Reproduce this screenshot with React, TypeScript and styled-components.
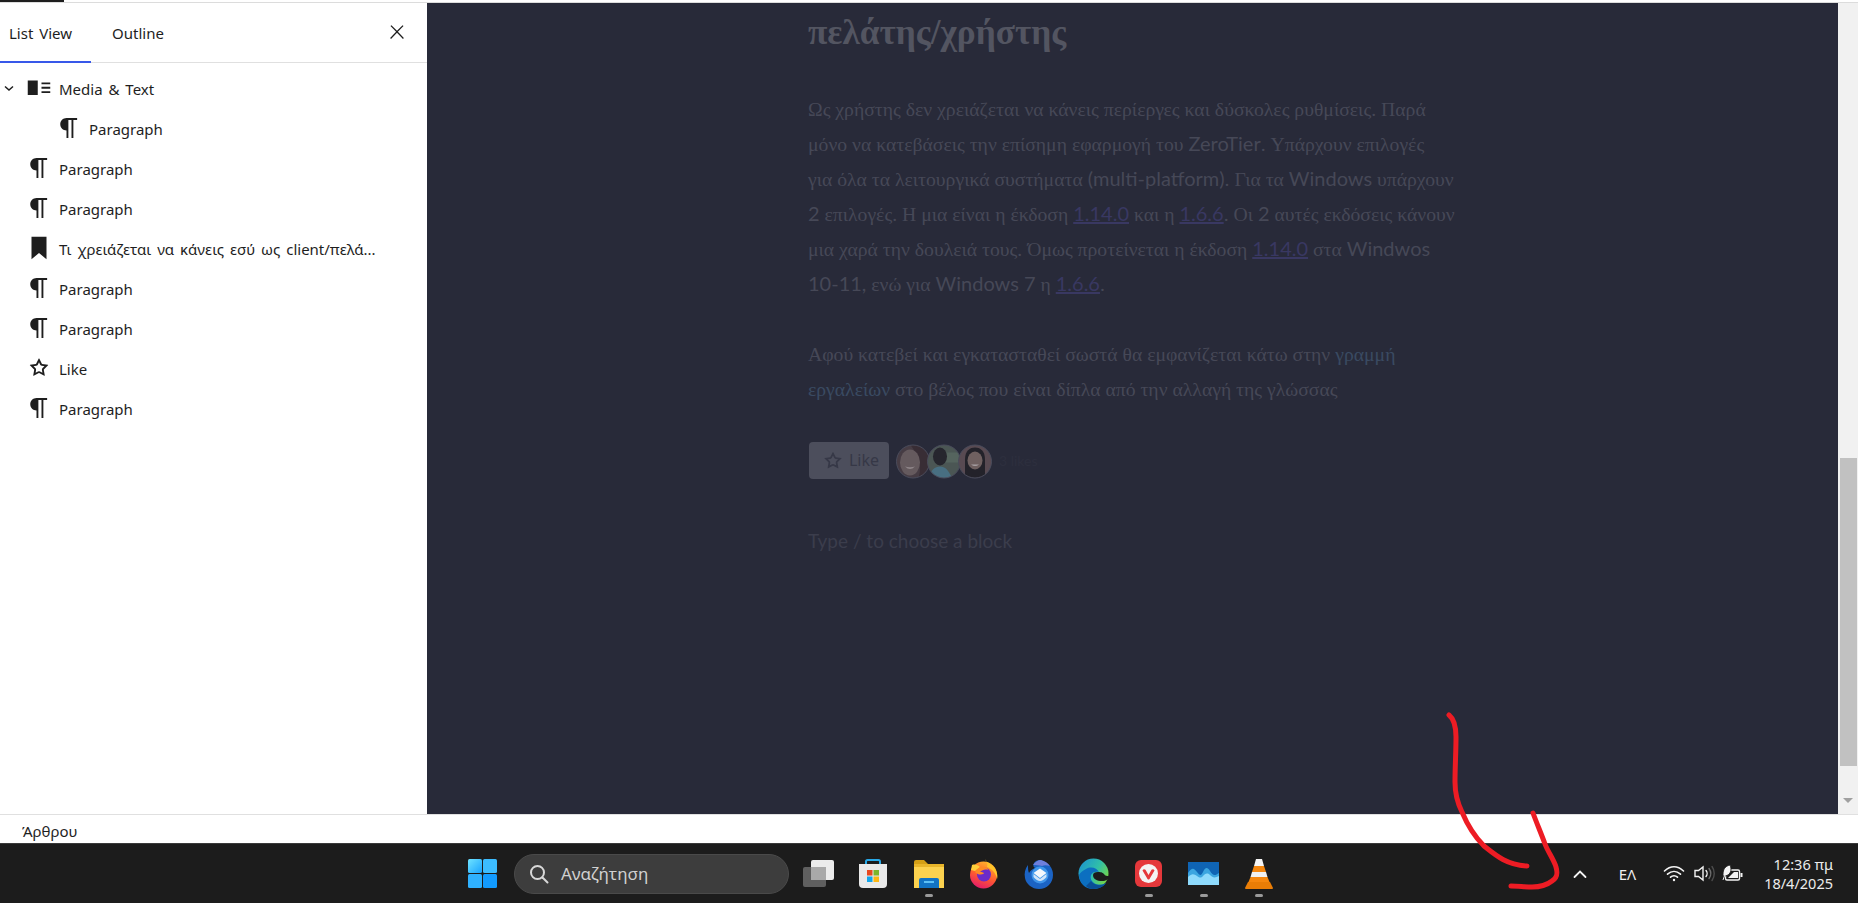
import React from "react";
import styled, { createGlobalStyle } from "styled-components";

const Global = createGlobalStyle`
  html, body { margin: 0; padding: 0; height: 100%; overflow: hidden; background: #fff; }
  #root { height: 100%; }
  * { box-sizing: border-box; }
`;

const Page = styled.div`
  position: relative;
  display: flex;
  flex-direction: column;
  height: 903px;
  width: 1858px;
  overflow: hidden;
  font-family: "Noto Sans", sans-serif;
`;
const TopStrip = styled.div`
  height: 3px;
  flex: none;
  background: #fff;
  border-bottom: 1px solid #dcdcdc;
`;
const TopTab = styled.div`
  width: 64px;
  height: 2px;
  background: #1e1e1e;
`;
const Main = styled.div`
  flex: 1;
  min-height: 0;
  display: flex;
  border-bottom: 1px solid #e0e0e0;
`;
const Sidebar = styled.aside`
  width: 428px;
  flex: none;
  background: #fff;
  border-right: 1px solid #282a39;
`;
const Tabs = styled.div`
  height: 60px;
  display: flex;
  align-items: center;
  border-bottom: 1px solid #e0e0e0;
  position: relative;
`;
const Tab = styled.div<{ $active?: boolean }>`
  height: 60px;
  width: ${(p) => (p.$active ? "91px" : "auto")};
  padding-left: ${(p) => (p.$active ? "9px" : "21px")};
  display: flex;
  align-items: center;
  font-size: 15px;
  word-spacing: 2px;
  color: #1e1e1e;
  box-shadow: ${(p) => (p.$active ? "inset 0 -2px 0 #3858e9" : "none")};
`;
const CloseBtn = styled.div`
  margin-left: auto;
  margin-right: 19px;
  display: flex;
  padding-bottom: 2px;
`;
const List = styled.div`
  padding-top: 6px;
`;
const Row = styled.div<{ $nested?: boolean }>`
  height: 40px;
  display: flex;
  align-items: center;
  padding-left: ${(p) => (p.$nested ? "54px" : "24px")};
  font-size: 15px;
  word-spacing: 2px;
  color: #1e1e1e;
  white-space: nowrap;
  position: relative;
`;
const Chevron = styled.svg`
  position: absolute;
  left: 0;
  top: 10px;
`;
const RowIcon = styled.svg`
  flex: none;
  width: 30px;
  height: 30px;
  margin-right: 5px;
  margin-top: -2px;
  fill: #1e1e1e;
`;
const Canvas = styled.main`
  flex: 1;
  background: #282a39;
  min-width: 0;
`;
const Article = styled.div`
  width: 650px;
  margin: 0 auto;
  font-family: "Liberation Serif", serif;
  font-size: 19.7px;
  line-height: 35px;
  color: #464857;
`;
const Heading = styled.h2`
  margin: 0;
  padding-top: 8px;
  height: 89px;
  font-family: "Liberation Serif", serif;
  font-weight: 700;
  font-size: 35.3px;
  line-height: 44px;
  color: #535561;
`;
const Para = styled.p`
  margin: 0 0 35px;
`;
const Line = styled.span`
  display: block;
  height: 35px;
  white-space: nowrap;
`;
const Latin = styled.span`
  font-family: Lato, sans-serif;
  font-size: 20px;
  line-height: 1;
`;
const Anchor = styled(Latin)`
  color: #393862;
  text-decoration: underline;
`;
const Highlight = styled.span`
  color: #3a4a62;
`;
const LikeRow = styled.div`
  display: flex;
  align-items: center;
  height: 37px;
  margin-top: 35px;
`;
const LikeButton = styled.div`
  width: 80px;
  height: 37px;
  margin-left: 1px;
  border-radius: 4px;
  background: #4c4e5c;
  display: flex;
  align-items: center;
  justify-content: center;
  gap: 2px;
  font-family: "Noto Sans", sans-serif;
  font-size: 16px;
  color: #363847;
`;
const Avatars = styled.div`
  display: flex;
  margin-left: 7px;
  align-self: flex-end;
`;
const Avatar = styled.svg`
  width: 34px;
  height: 35px;
  margin-right: -3px;
`;
const LikeCount = styled.span`
  margin-left: 10px;
  font-family: Lato, sans-serif;
  font-size: 14px;
  color: #2d2f3e;
`;
const Placeholder = styled.div`
  margin-top: 44px;
  font-family: Lato, sans-serif;
  font-size: 19px;
  color: #3b3d4c;
`;
const ScrollTrack = styled.div`
  width: 20px;
  flex: none;
  background: #f1f1f1;
  display: flex;
  flex-direction: column;
  align-items: flex-end;
`;
const ScrollThumb = styled.div`
  width: 17px;
  height: 308px;
  margin-top: 455px;
  margin-right: 1px;
  background: #c1c1c1;
`;
const ScrollArrow = styled.div`
  margin: auto 5px 11px 0;
  width: 0;
  height: 0;
  border-left: 5px solid transparent;
  border-right: 5px solid transparent;
  border-top: 5px solid #a0a0a0;
`;
const Footer = styled.div`
  height: 28px;
  flex: none;
  background: #fff;
  padding: 6px 0 0 22px;
  font-size: 15px;
  line-height: 20px;
  color: #1e1e1e;
`;
const Taskbar = styled.div`
  height: 60px;
  flex: none;
  background: #1c1c1c;
  border-top: 1px solid #3a3a3a;
  display: flex;
  align-items: center;
  padding-left: 468px;
  position: relative;
`;
const SearchBox = styled.div`
  width: 275px;
  height: 40px;
  margin: 0 7px 0 17px;
  border-radius: 20px;
  background: #3d3d3d;
  border: 1px solid #4a4a4a;
  display: flex;
  align-items: center;
  gap: 12px;
  padding-left: 14px;
  font-size: 17px;
  color: #d0d0d0;
`;
const TaskSlot = styled.div<{ $w: number; $on?: boolean }>`
  width: ${(p) => p.$w}px;
  height: 59px;
  display: flex;
  align-items: center;
  justify-content: center;
  position: relative;
  flex: none;
  &::after {
    content: "";
    display: ${(p) => (p.$on ? "block" : "none")};
    position: absolute;
    bottom: 6px;
    left: 50%;
    margin-left: -4px;
    width: 8px;
    height: 3px;
    border-radius: 2px;
    background: #9a9a9a;
  }
`;
const Tray = styled.div`
  margin-left: auto;
  display: flex;
  align-items: center;
  height: 100%;
  padding-right: 25px;
`;
const TrayChevron = styled.svg`
  margin-right: 32px;
`;
const Lang = styled.span`
  font-size: 15px;
  color: #f0f0f0;
  margin-right: 27px;
`;
const TrayIcons = styled.div`
  display: flex;
  align-items: center;
  gap: 6px;
  margin-right: 21px;
`;
const Clock = styled.div`
  text-align: right;
  font-size: 14.5px;
  line-height: 19px;
  color: #ececec;
`;
const Scribble = styled.svg`
  position: absolute;
  left: 1440px;
  top: 705px;
  pointer-events: none;
`;

const PILCROW = "m9.99609 14v-.2251l.00391.0001v6.225h1.5v-14.5h2.5v14.5h1.5v-14.5h3v-1.5h-8.50391c-2.76142 0-5 2.23858-5 5 0 2.7614 2.23858 5 5 5z";
const STAR = "M9.706 8.646a.25.25 0 01-.188.137l-4.626.672a.25.25 0 00-.139.427l3.348 3.262a.25.25 0 01.072.222l-.79 4.607a.25.25 0 00.362.264l4.138-2.176a.25.25 0 01.233 0l4.137 2.175a.25.25 0 00.363-.263l-.79-4.607a.25.25 0 01.072-.222l3.347-3.262a.25.25 0 00-.14-.427l-4.625-.672a.25.25 0 01-.188-.137l-2.069-4.192a.25.25 0 00-.448 0L9.706 8.646zM12 7.39l-.948 1.921a1.75 1.75 0 01-1.317.957l-2.12.308 1.534 1.495c.412.402.6.982.503 1.55l-.362 2.11 1.896-.997a1.75 1.75 0 011.629 0l1.895.997-.362-2.11a1.75 1.75 0 01.504-1.55l1.533-1.495-2.12-.308a1.75 1.75 0 01-1.317-.957L12 7.39z";

const rows: { d: string; label: string; nested?: boolean; chevron?: boolean }[] = [
  { d: "M3 6v11.5h8V6H3Zm11 3h7V7.5h-7V9Zm7 3.5h-7V11h7v1.5ZM14 16h7v-1.5h-7V16Z", label: "Media & Text", chevron: true },
  { d: PILCROW, label: "Paragraph", nested: true },
  { d: PILCROW, label: "Paragraph" },
  { d: PILCROW, label: "Paragraph" },
  { d: "M6 3H18V21L12 16L6 21V3Z", label: "Τι χρειάζεται να κάνεις εσύ ως client/πελά..." },
  { d: PILCROW, label: "Paragraph" },
  { d: PILCROW, label: "Paragraph" },
  { d: STAR, label: "Like" },
  { d: PILCROW, label: "Paragraph" },
];

const WinLogo = () => (
  <svg width="29" height="29" viewBox="0 0 29 29">
    <defs>
      <linearGradient id="w1" x1="0" y1="0" x2="1" y2="1">
        <stop offset="0" stopColor="#6fe3ff" />
        <stop offset="1" stopColor="#19a3ff" />
      </linearGradient>
    </defs>
    <rect x="0" y="0" width="14" height="14" rx="1.5" fill="url(#w1)" />
    <rect x="15" y="0" width="14" height="14" rx="1.5" fill="#3cbcff" />
    <rect x="0" y="15" width="14" height="14" rx="1.5" fill="#2fb1ff" />
    <rect x="15" y="15" width="14" height="14" rx="1.5" fill="#129bff" />
  </svg>
);
const SearchGlyph = () => (
  <svg width="20" height="20" viewBox="0 0 20 20" fill="none" stroke="#d8d8d8" strokeWidth="2">
    <circle cx="8.5" cy="8.5" r="6.5" />
    <path d="M13.5 13.5 18.5 18.5" strokeLinecap="round" />
  </svg>
);
const TaskView = () => (
  <svg width="34" height="30" viewBox="0 0 34 30">
    <rect x="0" y="8" width="23" height="20" rx="2" fill="#5f5f5f" />
    <rect x="8" y="1" width="23" height="20" rx="2" fill="#ececec" />
    <rect x="8" y="8" width="15" height="13" fill="#a9a9a9" />
  </svg>
);
const Store = () => (
  <svg width="30" height="30" viewBox="0 0 30 30">
    <path d="M8 6V2.5Q8 1 9.5 1h11Q22 1 22 2.5V6" fill="none" stroke="#28a9e8" strokeWidth="2" />
    <path d="M1 5h28v20q0 4-4 4H5q-4 0-4-4z" fill="#e9e9e9" />
    <rect x="9" y="11" width="5.5" height="5.5" fill="#e8491f" />
    <rect x="15.5" y="11" width="5.5" height="5.5" fill="#7db52a" />
    <rect x="9" y="17.5" width="5.5" height="5.5" fill="#12a5ea" />
    <rect x="15.5" y="17.5" width="5.5" height="5.5" fill="#fdb813" />
  </svg>
);
const Folder = () => (
  <svg width="30" height="28" viewBox="0 0 30 28">
    <path d="M0 2q0-2 2-2h8l4 4h-14z" fill="#d49f15" />
    <path d="M0 4h30v24H0z" fill="#fcd24f" />
    <path d="M0 4h30v3H0z" fill="#e8b52a" />
    <path d="M5 28v-8q0-2 2-2h16q2 0 2 2v8z" fill="#1173c4" />
    <rect x="10" y="21" width="10" height="2" fill="#5cc0f5" />
  </svg>
);
const Firefox = () => (
  <svg width="29" height="30" viewBox="0 0 29 30">
    <defs>
      <linearGradient id="ff" x1="0.7" y1="0" x2="0.3" y2="1">
        <stop offset="0" stopColor="#ffb52a" />
        <stop offset="0.55" stopColor="#ff5a30" />
        <stop offset="1" stopColor="#e3186d" />
      </linearGradient>
    </defs>
    <circle cx="14.5" cy="16" r="13.5" fill="url(#ff)" />
    <path d="M16 0c1 4 6 4 9 8 3 4 4 9 3 12-1-6-5-10-10-12 1-3 0-5-2-8z" fill="#ffc42a" />
    <path d="M3 6c3-1 6 0 8 2l-5 4-4-1z" fill="#ffcf3a" />
    <circle cx="15" cy="15.5" r="7" fill="#6b2bc9" />
    <path d="M6 13c2-4 6-6 10-5 2 .5 3 2 3 3-3-1-6 0-8 2 2 0 4 .5 4 1.500-3 2-7 1-9-1.500z" fill="#ff8a24" />
  </svg>
);
const Thunderbird = () => (
  <svg width="30" height="30" viewBox="0 0 30 30">
    <path d="M4 6C1 10 0 14 1 19c1 6 7 11 14 11 8 0 14-6 14-14 0-4-1-6-3-9-3-3-6-5-10-6-2 0-5 1-6 3-1 2-1 4 1 5-3 1-5 3-6 5-1-2-1-5-1-8z" fill="#1b63c4" />
    <path d="M9 6c2-3 5-5 8-5 4 1 7 3 9 6-3-1-6-1-8 0-3-1-6-1-9-1z" fill="#6f7fdc" />
    <circle cx="16" cy="16" r="8.500" fill="#3f95ea" />
    <path d="M9.500 14 16 9.500 22.500 14 16 19z" fill="#f4f7fc" />
    <path d="M9.500 15 16 20 22.500 15V18Q19 22 16 22T9.500 18z" fill="#d2e4f8" />
  </svg>
);
const Edge = () => (
  <svg width="31" height="31" viewBox="0 0 31 31">
    <defs>
      <linearGradient id="edg" x1="0" y1="0" x2="1" y2="0.6">
        <stop offset="0" stopColor="#1a8fd6" />
        <stop offset="0.6" stopColor="#30bfa8" />
        <stop offset="1" stopColor="#74d64a" />
      </linearGradient>
    </defs>
    <circle cx="15.5" cy="15.5" r="15" fill="url(#edg)" />
    <path d="M1 17C1 25 7 31 15 31c5 0 10-2 13-6-4 2-9 2-12 0-3-2-4-5-3-8 1-3 5-4 8-3-2-4-8-6-13-3C4 13 2 15 1 17z" fill="#0c6fc0" />
    <path d="M31 18c0 3-3 5-7 5-5 0-9-2-9-6 0-2 2-3 5-3 4 0 5 1 6 2 1 2 3 2 5 2z" fill="#1c1c1c" />
    <path d="M13 23c3 4 9 6 15 2-1 2-6 6-13 6-3 0-5-1-7-3z" fill="#0a4f96" />
  </svg>
);
const Vivaldi = () => (
  <svg width="27" height="27" viewBox="0 0 27 27">
    <rect x="0" y="0" width="27" height="27" rx="6" fill="#e5383b" />
    <circle cx="13.5" cy="13.5" r="9.5" fill="#f4f4f4" />
    <path d="M7.5 10.5q1-2 3-.8l3 5.3 3-5.3q2-1.2 3 .8l-5 8.5q-1 1.2-2 0z" fill="#e5383b" />
  </svg>
);
const Monitor = () => (
  <svg width="31" height="23" viewBox="0 0 31 23">
    <rect width="31" height="23" fill="#0f64b4" />
    <path d="M0 11c4-6 6-5 9-1s4 4 6 0 4-6 7-1 5 5 9 2v12H0z" fill="#3ba5e0" />
    <path d="M0 15c4-4 6-3 9-1s4 2 6 0 4-4 7-1 5 3 9 1v9H0z" fill="#8edafc" />
  </svg>
);
const Vlc = () => (
  <svg width="28" height="31" viewBox="0 0 28 31">
    <path d="M11 1h6l2 7H9z" fill="#f5f5f5" />
    <path d="M9 8h10l2 6H7z" fill="#f5870e" />
    <path d="M7 14h14l1.500 5h-17z" fill="#f0f0f0" />
    <path d="M5.500 19h17l2 5h-21z" fill="#f5870e" />
    <path d="M3 24l-3 6q0 1 1 1h26q1 0 1-1l-3-6z" fill="#e97d06" />
  </svg>
);
const Wifi = () => (
  <svg width="22" height="17" viewBox="0 0 22 17" fill="none" stroke="#f4f4f4" strokeWidth="1.6" strokeLinecap="round">
    <path d="M1.500 6c6-5.500 13-5.500 19 0" />
    <path d="M4.500 9.200c4-3.600 9-3.600 13 0" />
    <path d="M7.500 12.200c2-1.800 5-1.800 7 0" />
    <circle cx="11" cy="15" r="1.200" fill="#f4f4f4" stroke="none" />
  </svg>
);
const Speaker = () => (
  <svg width="25" height="17" viewBox="-3 0 25 17" fill="none" stroke="#f4f4f4" strokeWidth="1.4">
    <path d="M1 5.500h3.500L9 2v13L4.500 11.500H1z" />
    <path d="M12 5.500c1.400 1.600 1.400 4.400 0 6" strokeLinecap="round" />
    <path d="M15 3.500c2.200 3 2.200 7 0 10" stroke="#6e6e6e" strokeLinecap="round" />
    <path d="M18 1.500c3 4 3 10 0 14" stroke="#4c4c4c" strokeLinecap="round" />
  </svg>
);
const Battery = () => (
  <svg width="21" height="17" viewBox="0 0 21 17" fill="none" stroke="#f4f4f4" strokeWidth="1.400">
    <rect x="3.500" y="5" width="14" height="10" rx="1.500" />
    <rect x="18.500" y="8" width="2" height="4" fill="#f4f4f4" stroke="none" />
    <path d="M6 13l6-6h4v6z" fill="#f4f4f4" stroke="none" />
    <path d="M8 0C3 1 1 4.500 1 9.500c0 1 .3 1.500 1 1.500 4.500 0 7-3 7-7 0-1.500-.5-3-1-4z" fill="#f4f4f4" stroke="#1c1c1c" strokeWidth=".9" />
    <path d="M1 15c1-4 3-7 5-9" stroke="#f4f4f4" strokeWidth="1" />
  </svg>
);

const AvatarRing = ({ id, children }: { id: string; children: React.ReactNode }) => (
  <Avatar viewBox="0 0 34 34">
    <clipPath id={id}><circle cx="17" cy="17" r="16.500" /></clipPath>
    <g clipPath={`url(#${id})`}>{children}</g>
    <circle cx="17" cy="17" r="16.500" fill="none" stroke="#4a4c5c" />
  </Avatar>
);

export default function App() {
  return (
    <Page>
      <Global />
      <TopStrip><TopTab /></TopStrip>
      <Main>
        <Sidebar>
          <Tabs>
            <Tab $active>List View</Tab>
            <Tab>Outline</Tab>
            <CloseBtn>
              <svg width="22" height="22" viewBox="0 0 24 24" fill="#1e1e1e">
                <path d="M13 11.800l6.100-6.300-1-1-6.100 6.200-6.100-6.200-1 1 6.100 6.300-6.500 6.700 1 1 6.500-6.600 6.500 6.600 1-1z" />
              </svg>
            </CloseBtn>
          </Tabs>
          <List>
            {rows.map((r, i) => (
              <Row key={i} $nested={r.nested}>
                {r.chevron && (
                  <Chevron width="18" height="18" viewBox="0 0 18 18" fill="none" stroke="#1e1e1e" strokeWidth="1.500">
                    <path d="M5 7.500l4 3.500 4-3.500" />
                  </Chevron>
                )}
                <RowIcon viewBox="0 0 24 24"><path d={r.d} fillRule="evenodd" /></RowIcon>
                {r.label}
              </Row>
            ))}
          </List>
        </Sidebar>
        <Canvas>
          <Article>
            <Heading>πελάτης/χρήστης</Heading>
            <Para>
              <Line>Ως χρήστης δεν χρειάζεται να κάνεις περίεργες και δύσκολες ρυθμίσεις. Παρά</Line>
              <Line>μόνο να κατεβάσεις την επίσημη εφαρμογή του <Latin>ZeroTier</Latin>. Υπάρχουν επιλογές</Line>
              <Line>για όλα τα λειτουργικά συστήματα <Latin>(multi-platform)</Latin>. Για τα <Latin>Windows</Latin> υπάρχουν</Line>
              <Line><Latin>2</Latin> επιλογές. Η μια είναι η έκδοση <Anchor>1.14.0</Anchor> και η <Anchor>1.6.6</Anchor>. Οι <Latin>2</Latin> αυτές εκδόσεις κάνουν</Line>
              <Line>μια χαρά την δουλειά τους. Όμως προτείνεται η έκδοση <Anchor>1.14.0</Anchor> στα <Latin>Windwos</Latin></Line>
              <Line><Latin>10-11,</Latin> ενώ για <Latin>Windows 7</Latin> η <Anchor>1.6.6</Anchor>.</Line>
            </Para>
            <Para>
              <Line>Αφού κατεβεί και εγκατασταθεί σωστά θα εμφανίζεται κάτω στην <Highlight>γραμμή</Highlight></Line>
              <Line><Highlight>εργαλείων</Highlight> στο βέλος που είναι δίπλα από την αλλαγή της γλώσσας</Line>
            </Para>
            <LikeRow>
              <LikeButton>
                <svg width="28" height="28" viewBox="0 0 24 24" fill="#363847"><path fillRule="evenodd" d={STAR} /></svg>
                Like
              </LikeButton>
              <Avatars>
                <AvatarRing id="av1">
                  <rect width="34" height="34" fill="#463c44" />
                  <path d="M14 0h20v34H22c4-8 2-22-8-34z" fill="#382d35" />
                  <ellipse cx="14" cy="18" rx="10" ry="13" fill="#655a5e" />
                  <path d="M9 22q5 5 10 0-5 1.500-10 0z" fill="#8f8589" />
                </AvatarRing>
                <AvatarRing id="av2">
                  <rect width="34" height="34" fill="#4b5654" />
                  <rect x="18" y="8" width="16" height="10" fill="#55645e" />
                  <ellipse cx="13" cy="12" rx="7" ry="9" fill="#26262e" />
                  <path d="M2 34c1-8 6-12 11-12s9 4 12 12z" fill="#486f82" />
                </AvatarRing>
                <AvatarRing id="av3">
                  <rect width="34" height="34" fill="#584a52" />
                  <path d="M7 34V15C7 6 12 3 17 3s10 3 10 12v19z" fill="#23222a" />
                  <ellipse cx="17" cy="16" rx="7.500" ry="9" fill="#6f6060" />
                  <path d="M13 20q4 3 8 0z" fill="#a79fa3" />
                </AvatarRing>
              </Avatars>
              <LikeCount>3 likes</LikeCount>
            </LikeRow>
            <Placeholder>Type / to choose a block</Placeholder>
          </Article>
        </Canvas>
        <ScrollTrack>
          <ScrollThumb />
          <ScrollArrow />
        </ScrollTrack>
      </Main>
      <Footer>Άρθρου</Footer>
      <Taskbar>
        <WinLogo />
        <SearchBox><SearchGlyph />Αναζήτηση</SearchBox>
        <TaskSlot $w={48}><TaskView /></TaskSlot>
        <TaskSlot $w={58}><Store /></TaskSlot>
        <TaskSlot $w={54} $on><Folder /></TaskSlot>
        <TaskSlot $w={55}><Firefox /></TaskSlot>
        <TaskSlot $w={55}><Thunderbird /></TaskSlot>
        <TaskSlot $w={55}><Edge /></TaskSlot>
        <TaskSlot $w={55} $on><Vivaldi /></TaskSlot>
        <TaskSlot $w={55} $on><Monitor /></TaskSlot>
        <TaskSlot $w={55} $on><Vlc /></TaskSlot>
        <Tray>
          <TrayChevron width="14" height="10" viewBox="0 0 14 10" fill="none" stroke="#f4f4f4" strokeWidth="1.800" strokeLinecap="round">
            <path d="M1.500 8 7 2.500 12.500 8" />
          </TrayChevron>
          <Lang>ΕΛ</Lang>
          <TrayIcons>
            <Wifi />
            <Speaker />
            <Battery />
          </TrayIcons>
          <Clock>
            12:36 πμ<br />18/4/2025
          </Clock>
        </Tray>
      </Taskbar>
      <Scribble width="130" height="190" viewBox="1440 705 130 190" fill="none" stroke="#ed1c24" strokeWidth="5" strokeLinecap="round" strokeLinejoin="round">
        <path d="M1449 715c5 4 7 10 7 22 0 15-1 30-1 45 0 12 2 20 7 30 5 12 12 24 22 34 10 8 22 19 43 20" />
        <path d="M1533 813c4 11 8 20 12 31 3 8 9 16 11 23 2 7 1 11-4 14-5 4-12 6-20 6-7 0-14-1-21-1" />
      </Scribble>
    </Page>
  );
}
